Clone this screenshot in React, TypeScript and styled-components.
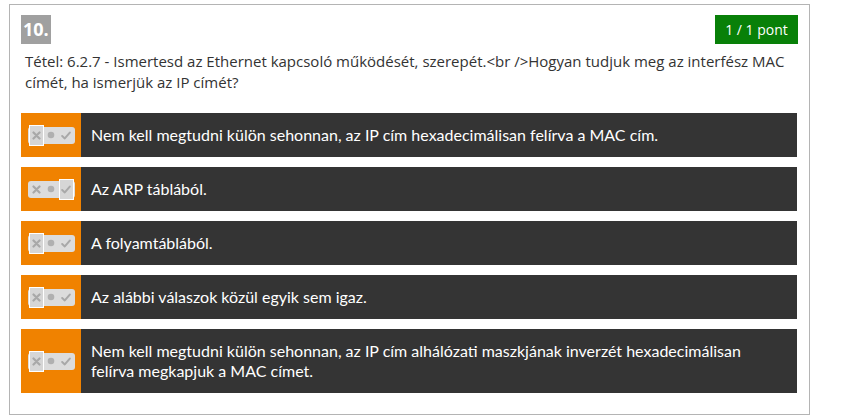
import React from "react";
import styled, { createGlobalStyle } from "styled-components";

const Global = createGlobalStyle`
  html, body { margin: 0; padding: 0; background: #fff; }
  body { font-family: "Open Sans", "Liberation Sans", sans-serif; }
`;

const Card = styled.div`
  box-sizing: border-box;
  width: 801px;
  margin: 4px 0 0 9px;
  border: 1px solid #b4b4b4;
  padding: 10px 11px 21px 11px;
`;

const Header = styled.div`
  display: flex;
  justify-content: space-between;
  align-items: flex-start;
`;

const Number = styled.div`
  background: #a0a0a0;
  color: #fff;
  font-family: "Open Sans", "Liberation Sans", sans-serif;
  font-weight: 700;
  font-size: 18px;
  height: 29px;
  line-height: 29px;
  padding: 0 2px;
  min-width: 26px;
`;

const Score = styled.div`
  background: #088008;
  color: #fff;
  font-family: "Open Sans", "Liberation Sans", sans-serif;
  font-size: 14px;
  height: 29px;
  line-height: 29px;
  width: 83px;
  text-align: center;
`;

const Question = styled.div`
  color: #333;
  font-size: 15px;
  line-height: 21px;
  margin: 7px 0 20px 4px;
`;

const List = styled.div`
  display: flex;
  flex-direction: column;
  gap: 10px;
`;

const Row = styled.div`
  display: flex;
  width: 776px;
`;

const Handle = styled.div`
  width: 60px;
  flex: none;
  background: #f08200;
  display: flex;
  align-items: center;
  justify-content: center;
`;

const Body = styled.div`
  flex: 1;
  background: #343434;
  color: #fff;
  font-family: Lato, "Liberation Sans", sans-serif;
  font-size: 16px;
  line-height: 20px;
  padding: 12px 10px;
  display: flex;
  align-items: center;
`;

const Pill = styled.div`
  display: flex;
  align-items: center;
  background: #dcdcdc;
  border-radius: 3px;
  height: 17px;
  padding: 0 1px;
`;

const Seg = styled.div<{ $on?: boolean }>`
  box-sizing: border-box;
  width: 15px;
  height: ${(p) => (p.$on ? "21px" : "17px")};
  display: flex;
  align-items: center;
  justify-content: center;
  border: ${(p) => (p.$on ? "1px solid #fff" : "1px solid transparent")};
  background: ${(p) => (p.$on ? "#d6d6d6" : "transparent")};
`;

const XIcon = () => (
  <svg width="9" height="9" viewBox="0 0 9 9">
    <path d="M1.5 1.5 L7.5 7.5 M7.5 1.5 L1.5 7.5" stroke="#a8a8a8" strokeWidth="2.2" strokeLinecap="round" />
  </svg>
);
const Dot = () => (
  <svg width="8" height="8" viewBox="0 0 8 8">
    <circle cx="4" cy="4" r="3.3" fill="#b0b0b0" />
  </svg>
);
const Check = () => (
  <svg width="10" height="9" viewBox="0 0 10 9">
    <path d="M1.2 5 L3.8 7.4 L8.8 1.6" stroke="#a8a8a8" strokeWidth="2" fill="none" strokeLinecap="round" strokeLinejoin="round" />
  </svg>
);

type Sel = "x" | "o" | "v";

const Toggle = ({ sel }: { sel: Sel }) => (
  <Pill>
    <Seg $on={sel === "x"}><XIcon /></Seg>
    <Seg $on={sel === "o"}><Dot /></Seg>
    <Seg $on={sel === "v"}><Check /></Seg>
  </Pill>
);

const answers: { text: string; sel: Sel }[] = [
  { text: "Nem kell megtudni külön sehonnan, az IP cím hexadecimálisan felírva a MAC cím.", sel: "x" },
  { text: "Az ARP táblából.", sel: "v" },
  { text: "A folyamtáblából.", sel: "x" },
  { text: "Az alábbi válaszok közül egyik sem igaz.", sel: "x" },
  {
    text: "Nem kell megtudni külön sehonnan, az IP cím alhálózati maszkjának inverzét hexadecimálisan felírva megkapjuk a MAC címet.",
    sel: "x",
  },
];

const AnswerText = styled.span`
  max-width: 690px;
`;

export default function App() {
  return (
    <>
      <Global />
      <Card>
        <Header>
          <Number>10.</Number>
          <Score>1 / 1 pont</Score>
        </Header>
        <Question>
          Tétel: 6.2.7 - Ismertesd az Ethernet kapcsoló működését, szerepét.&lt;br /&gt;Hogyan tudjuk meg az interfész MAC
          címét, ha ismerjük az IP címét?
        </Question>
        <List>
          {answers.map((a, i) => (
            <Row key={i}>
              <Handle>
                <Toggle sel={a.sel} />
              </Handle>
              <Body>
                <AnswerText>{a.text}</AnswerText>
              </Body>
            </Row>
          ))}
        </List>
      </Card>
    </>
  );
}
